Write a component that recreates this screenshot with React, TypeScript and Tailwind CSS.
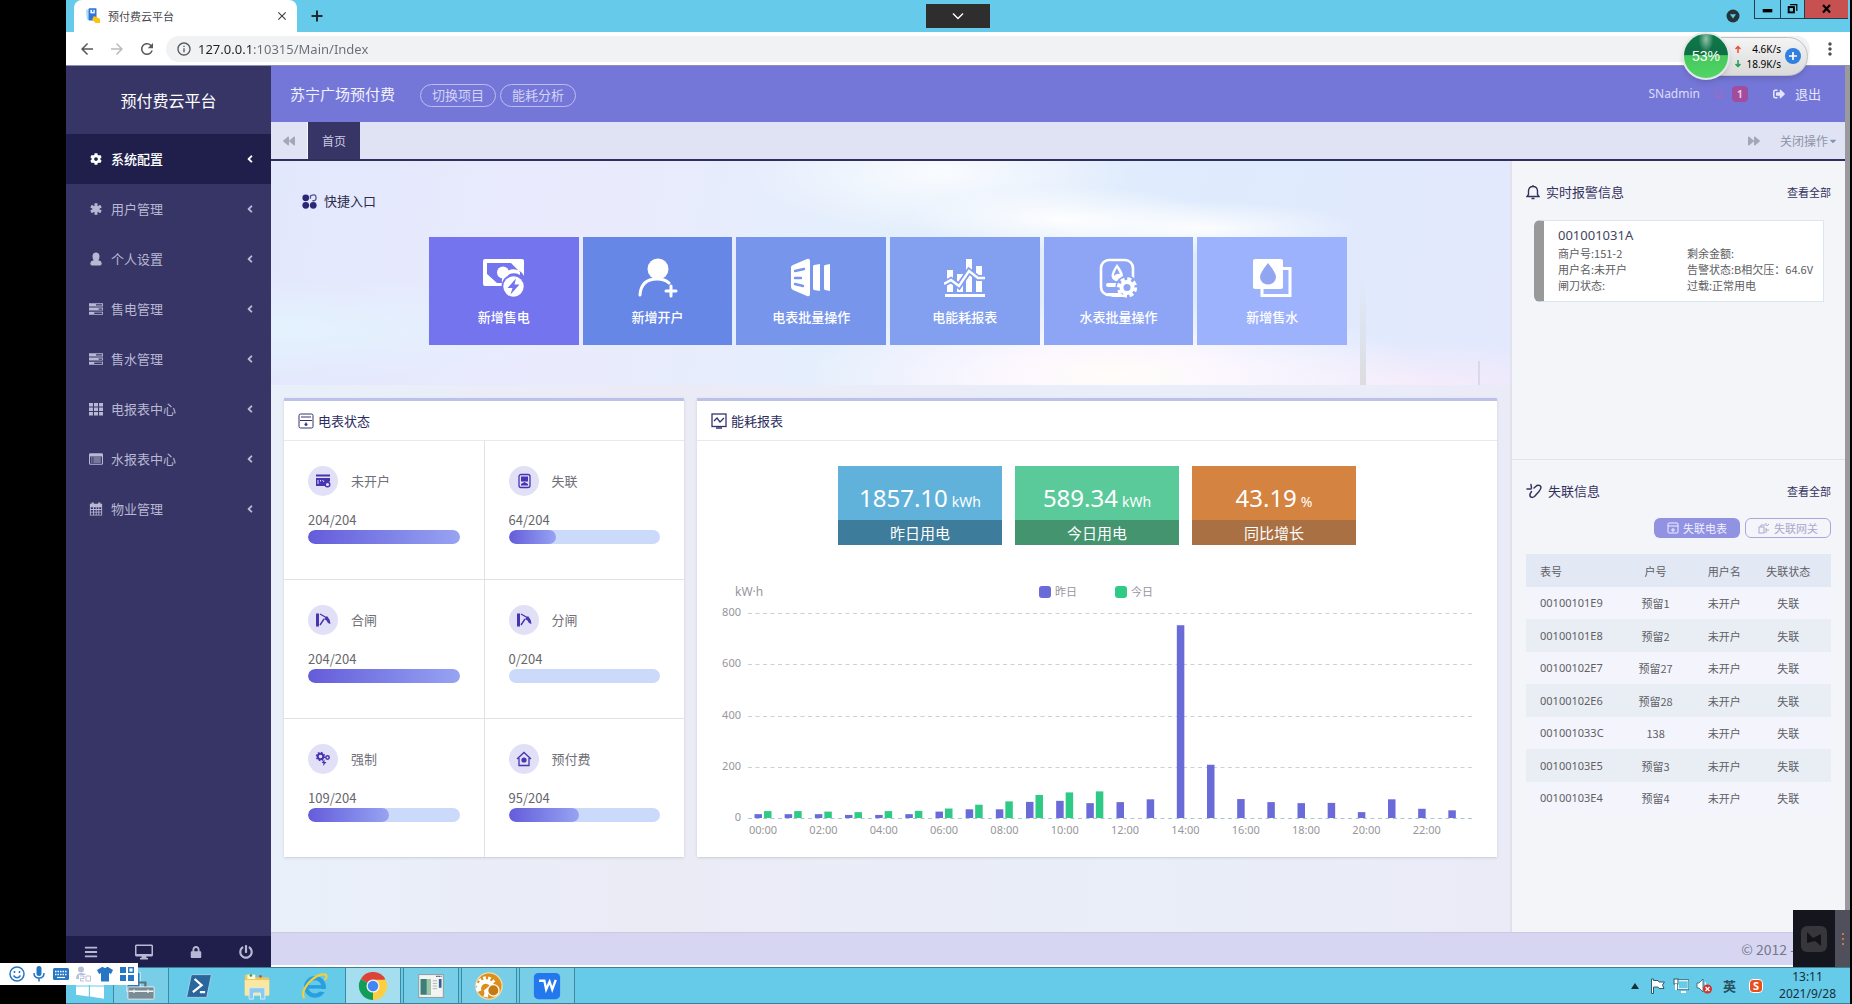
import type { ReactNode } from "react";
import {
  FaAngleLeft,
  FaBackward,
  FaBars,
  FaCaretDown,
  FaCog,
  FaForward,
  FaLock,
  FaPowerOff,
  FaSignOutAlt,
} from "react-icons/fa";
import {
  MdArrowBack,
  MdArrowForward,
  MdClose,
  MdMoreVert,
  MdOutlineInfo,
  MdRefresh,
} from "react-icons/md";

/* ---------- Browser window ---------- */

function TabStrip() {
  return (
    <div className="flex h-8 items-stretch bg-[#66cbea]">
      <div className="ml-2 flex w-[223px] items-center gap-2 rounded-t-lg bg-white pr-2 pl-3">
        <svg viewBox="0 0 16 18" className="h-4 w-3.5 shrink-0">
          <path d="M0 2 L4 1 V14 L1 13 Z" fill="#a9dcf5" />
          <rect x="3" y="0" width="9" height="14" rx="1" fill="#2f74d8" />
          <rect x="5" y="2" width="5" height="4" fill="#fff" />
          <rect x="7" y="2" width="1.5" height="2.5" fill="#2f74d8" />
          <path d="M9 9 L16 12 V17 H11 L7 13 Z" fill="#fcc40c" />
        </svg>
        <span className="flex-1 text-[11px] leading-4 text-[#45484d]">预付费云平台</span>
        <button aria-label="关闭标签页" className="text-[#3c4043]">
          <MdClose className="size-3.5" />
        </button>
      </div>
      <button aria-label="新标签页" className="ml-3 text-[#1f2a30]">
        <svg viewBox="0 0 16 16" className="size-4">
          <path d="M8 2.5V13.5M2.5 8H13.5" stroke="currentColor" strokeWidth="2" />
        </svg>
      </button>
      <div className="flex-1" />
      <button aria-label="搜索标签页" className="mr-3.5">
        <svg viewBox="0 0 14 14" className="size-3.5">
          <circle cx="7" cy="7" r="6.5" fill="#24343b" />
          <path d="M4 5.2H10L7 9.4Z" fill="#66cbea" />
        </svg>
      </button>
      <div className="mr-0.5 flex h-[19px] items-stretch border-b border-l border-[#22404c] text-black">
        <button aria-label="最小化" className="w-[26px] border-r border-[#22404c]">
          <svg viewBox="0 0 26 18" className="h-[18px] w-full">
            <rect x="8" y="9" width="10" height="3.5" />
          </svg>
        </button>
        <button aria-label="还原" className="w-6 border-r border-[#22404c]">
          <svg viewBox="0 0 24 18" className="h-[18px] w-full" fill="none" stroke="black">
            <path d="M9.5 4.5H16.5V11" strokeWidth="1.2" />
            <rect x="8" y="7" width="5.5" height="5.5" strokeWidth="2" />
          </svg>
        </button>
        <button aria-label="关闭" className="w-[43px] bg-[#c75050]">
          <svg viewBox="0 0 43 18" className="h-[18px] w-full">
            <path d="M18 5L25 12.5M25 5L18 12.5" stroke="black" strokeWidth="2.2" />
          </svg>
        </button>
      </div>
    </div>
  );
}

function Toolbar() {
  return (
    <div className="flex h-[34px] items-center border-b border-[#8f8fb4] bg-white pl-3 text-[#55585c]">
      <button aria-label="后退">
        <MdArrowBack className="size-[18px]" />
      </button>
      <button aria-label="前进" className="ml-3 text-[#b9bbbe]">
        <MdArrowForward className="size-[18px]" />
      </button>
      <button aria-label="刷新" className="ml-3">
        <MdRefresh className="size-[18px]" />
      </button>
      <div className="ml-2.5 flex h-[26px] flex-1 items-center gap-1.5 rounded-full bg-[#f1f2f4] px-2.5">
        <MdOutlineInfo className="size-4" />
        <input
          aria-label="地址"
          defaultValue="127.0.0.1:10315/Main/Index"
          className="w-full flex-1 bg-[linear-gradient(90deg,#202124_54px,#6a6d72_54px)] bg-clip-text font-['Noto_Sans'] text-[13px] leading-5 text-transparent outline-none"
        />
      </div>
      <button aria-label="菜单" className="mx-2.5 text-[#4a4d51]">
        <MdMoreVert className="size-5" />
      </button>
    </div>
  );
}

/* ---------- Sidebar ---------- */

const tasksIcon = (
  <path
    fillRule="evenodd"
    d="M0 1.500H16V5H0ZM8 2.500V4H15V2.500ZM0 6.300H16V9.800H0ZM11 7.300V8.800H15V7.300ZM0 11.100H16V14.600H0ZM6 12.100V13.600H15V12.100Z"
  />
);

const menu: { label: string; icon: ReactNode; active?: boolean }[] = [
  { label: "系统配置", icon: null, active: true },
  {
    label: "用户管理",
    icon: (
      <path d="M8 1.500V14.500M2.300 4.700L13.700 11.300M13.700 4.700L2.300 11.300" stroke="currentColor" strokeWidth="3.400" />
    ),
  },
  {
    label: "个人设置",
    icon: (
      <path d="M8 0.500Q12 0.500 12 5Q12 8 10.500 9.500Q14.500 10 14.500 13.500Q14.500 15.500 12.500 15.500H3.500Q1.500 15.500 1.500 13.500Q1.500 10 5.500 9.500Q4 8 4 5Q4 0.500 8 0.500Z" />
    ),
  },
  { label: "售电管理", icon: tasksIcon },
  { label: "售水管理", icon: tasksIcon },
  {
    label: "电报表中心",
    icon: (
      <path d="M0 1H4.500V5H0ZM5.700 1H10.300V5H5.700ZM11.500 1H16V5H11.500ZM0 6.200H4.500V10.200H0ZM5.700 6.200H10.300V10.200H5.700ZM11.500 6.200H16V10.200H11.500ZM0 11.400H4.500V15.400H0ZM5.700 11.400H10.300V15.400H5.700ZM11.500 11.400H16V15.400H11.500Z" />
    ),
  },
  {
    label: "水报表中心",
    icon: (
      <path
        fillRule="evenodd"
        d="M1 1.500H15L16 2.500V13.500L15 14.500H1L0 13.500V2.500ZM1.200 5V13.300H14.800V5ZM2.500 6.200H4V7.400H2.500ZM5 6.200H13.500V7.400H5ZM2.500 8.500H4V9.700H2.500ZM5 8.500H13.500V9.700H5ZM2.500 10.800H4V12H2.500ZM5 10.800H13.500V12H5Z"
      />
    ),
  },
  {
    label: "物业管理",
    icon: (
      <path
        fillRule="evenodd"
        d="M1 2H3V.500H5.500V2H10.500V.500H13V2H15V15.500H1ZM2 6V8H4.600V6ZM5.600 6V8H7.700V6ZM8.700 6V8H10.700V6ZM11.700 6V8H14V6ZM2 9V11H4.600V9ZM5.600 9V11H7.700V9ZM8.700 9V11H10.700V9ZM11.700 9V11H14V9ZM2 12V14.500H4.600V12ZM5.600 12V14.500H7.700V12ZM8.700 12V14.500H10.700V12ZM11.700 12V14.500H14V12Z"
      />
    ),
  },
];

function Sidebar() {
  return (
    <aside className="flex w-[205px] shrink-0 flex-col bg-[#363565]">
      <h1 className="py-[22px] text-center text-base leading-6 text-white">预付费云平台</h1>
      <nav className="flex flex-1 flex-col">
        {menu.map(({ label, icon, active }) => (
          <a
            key={label}
            href="#"
            className={
              active
                ? "flex h-[50px] items-center bg-[#201f4b] pr-[15px] pl-[23px] text-[13px] font-medium text-white"
                : "flex h-[50px] items-center pr-[15px] pl-[23px] text-[13px] text-[#b9b8d4]"
            }
          >
            {icon ? (
              <svg viewBox="0 0 16 16" className="mr-2 size-3.5" fill="currentColor">
                {icon}
              </svg>
            ) : (
              <FaCog className="mr-2 size-3.5 p-px" />
            )}
            <span className="flex-1">{label}</span>
            <FaAngleLeft className="size-3" />
          </a>
        ))}
      </nav>
      <div className="flex h-[31px] items-center justify-around bg-[#201f4b] text-[#b9b8d4]">
        <button aria-label="菜单">
          <FaBars className="size-3.5" />
        </button>
        <button aria-label="全屏">
          <svg viewBox="0 0 18 16" className="h-4 w-[18px]" fill="currentColor">
            <path
              fillRule="evenodd"
              d="M1 .500H17L18 1.500V11.500L17 12.500H11.500V14H13V15.500H5V14H6.500V12.500H1L0 11.500V1.500ZM1.500 2V10H16.500V2Z"
            />
          </svg>
        </button>
        <button aria-label="锁定">
          <FaLock className="size-3" />
        </button>
        <button aria-label="退出系统">
          <FaPowerOff className="size-3.5" />
        </button>
      </div>
    </aside>
  );
}

/* ---------- Page header ---------- */

function PageHeader() {
  return (
    <>
      <header className="flex h-14 items-center bg-[#7577d8] pr-6 pl-[19px] text-[#e6e6fb]">
        <span className="text-[15px] leading-5 text-[#f2f2ff]">苏宁广场预付费</span>
        <div className="mt-0.5 ml-[25px] flex gap-1">
          {["切换项目", "能耗分析"].map((t) => (
            <button
              key={t}
              className="h-[23px] w-[76px] rounded-full border border-[#bcbdf0] text-[13px] leading-5 text-[#d2d3f6]"
            >
              {t}
            </button>
          ))}
        </div>
        <div className="flex-1" />
        <span className="font-['Noto_Sans'] text-xs leading-5 text-[#dcdcf8]">SNadmin</span>
        <button aria-label="消息" className="ml-3.5 flex items-center gap-2">
          <svg viewBox="0 0 12 12" className="size-2.5" fill="none" stroke="#9a6cc4" strokeWidth="1.500">
            <path d="M2 9V5Q2 1.500 6 1.500Q10 1.500 10 5V9H2ZM4.500 11H7.500" />
          </svg>
          <span className="size-4 rounded-sm bg-[#a04d9e] font-['Noto_Sans'] text-[10px] leading-4 font-bold text-[#f0c8e0]">
            1
          </span>
        </button>
        <a href="#" className="ml-[25px] flex items-center gap-2.5 text-[13px] leading-5">
          <FaSignOutAlt className="size-3" />
          退出
        </a>
      </header>
      <div className="flex h-[39px] items-stretch border-b-2 border-[#2f2e5c] bg-[#dfe3f4] text-[#8f93a8]">
        <button aria-label="向左滚动" className="w-[37px] border-r border-white/70 pl-3 text-[#a3a6b8]">
          <FaBackward className="size-3" />
        </button>
        <button className="w-[52px] bg-[#363565] text-xs text-[#c9c8e2]">首页</button>
        <div className="flex-1" />
        <button aria-label="向右滚动" className="pr-5 text-[#a3a6b8]">
          <FaForward className="size-3" />
        </button>
        <button className="flex items-center pr-[7px] text-xs">
          关闭操作
          <FaCaretDown className="size-2.5" />
        </button>
      </div>
    </>
  );
}

/* ---------- Quick entries ---------- */

const tiles: { label: string; tone: string; icon: ReactNode }[] = [
  {
    label: "新增售电",
    tone: "bg-[#7474ee]",
    icon: (
      <>
        <path
          fillRule="evenodd"
          d="M2 1H39Q41 1 41 3V18A11 11 0 0 0 20 28H2Q0 28 0 26V3Q0 1 2 1ZM4 5V16L14 25H20A11 11 0 0 1 37 17V14L28 5Z"
        />
        <circle cx="20" cy="14.5" r="6" />
        <circle cx="30.5" cy="28.5" r="12" fill="#7474ee" />
        <circle cx="30.5" cy="28.5" r="10.2" />
        <path d="M33 20.5L24.5 30H29.5L27.5 36.5L36.5 26.5H31.5Z" fill="#7474ee" />
      </>
    ),
  },
  {
    label: "新增开户",
    tone: "bg-[#6787e6]",
    icon: (
      <>
        <circle cx="22" cy="11" r="10.5" />
        <path d="M4 37Q5 21 21 21Q29 21 33 25" fill="none" stroke="white" strokeWidth="3" strokeLinecap="round" />
        <path d="M35 28V38M30 33H40" stroke="white" strokeWidth="3" strokeLinecap="round" />
      </>
    ),
  },
  {
    label: "电表批量操作",
    tone: "bg-[#7795eb]",
    icon: (
      <>
        <path d="M3 7L17 1Q20 0 20 3V36Q20 39 17 38L3 32Q1 31 1 29V9Q1 8 3 7Z" />
        <path d="M5 13L14 11M5 20H11M5 26L13 28" stroke="#7795eb" strokeWidth="2.4" strokeLinecap="round" />
        <path d="M24 7L30 6V33L24 32Q23 32 23 30V9Q23 7 24 7Z" />
        <path d="M35 7L40 6V33L35 32Q34 32 34 30V9Q34 7 35 7Z" />
      </>
    ),
  },
  {
    label: "电能耗报表",
    tone: "bg-[#839ff0]",
    icon: (
      <>
        <path d="M3 12H9V34H3ZM13 16H19V34H13ZM22 1H28V34H22ZM32 8H38V34H32Z" />
        <path d="M0 26L7 22L15 28L25 13L34 20H41" fill="none" stroke="#839ff0" strokeWidth="6" />
        <path d="M0 26L7 22L15 28L25 13L34 20H41" fill="none" stroke="white" strokeWidth="2.4" />
        <rect x="1" y="36" width="40" height="3" />
      </>
    ),
  },
  {
    label: "水表批量操作",
    tone: "bg-[#8da5f4]",
    icon: (
      <>
        <rect x="4" y="2" width="32" height="35" rx="8" fill="none" stroke="white" strokeWidth="2.6" />
        <path d="M20 6Q26 14 26 17.5A5.7 5.7 0 0 1 14.500 17.500Q14.500 14 20 6Z" />
        <path d="M20 10Q17 15 17 18Q20 15 23 16Z" fill="#8da5f4" />
        <rect x="9" y="25" width="12" height="4" rx="2" />
        <circle cx="30" cy="29" r="11.500" fill="#8da5f4" />
        <path d="M10 35H24L28 39H16Q12 38 10 35Z" />
        <circle cx="30" cy="29.500" r="7.500" />
        <circle
          cx="30"
          cy="29.500"
          r="8.500"
          fill="none"
          stroke="white"
          strokeWidth="3.400"
          strokeDasharray="4 2.675"
        />
        <circle cx="30" cy="29.500" r="3.500" fill="#8da5f4" />
      </>
    ),
  },
  {
    label: "新增售水",
    tone: "bg-[#9db2fd]",
    icon: (
      <>
        <path d="M30 10.500H39V37.500H11V30" fill="none" stroke="white" strokeWidth="3" />
        <rect x="2" y="1" width="30" height="30" rx="2" />
        <path d="M17 5Q25 15 25 19A8 7.500 0 0 1 9 19Q9 15 17 5Z" fill="#91a5f0" />
      </>
    ),
  },
];

function QuickEntry() {
  return (
    <section className="relative bg-[radial-gradient(ellipse_at_64%_26%,rgba(255,255,255,.95)_0%,transparent_14%),radial-gradient(ellipse_at_75%_30%,rgba(255,255,255,.9)_0%,transparent_12%),radial-gradient(ellipse_at_54%_5%,rgba(255,255,255,.8)_0%,transparent_20%),radial-gradient(ellipse_at_68%_96%,#fffdf8_0%,rgba(254,248,255,.9)_10%,transparent_26%),radial-gradient(ellipse_at_92%_100%,#f6ecfb_0%,transparent_14%),radial-gradient(ellipse_at_0%_75%,#e4f2fe_0%,transparent_22%),linear-gradient(100deg,#e2e8fc_0%,#eaeafd_24%,#e4effc_48%,#dfebfd_75%,#e3e8fd_100%)] pt-[30px] pr-9 pb-10 pl-[31px]">
      <h2 className="flex items-center gap-[7px] text-[13px] leading-5 text-[#2b2b4a]">
        <svg viewBox="0 0 16 16" className="size-[15px]" fill="#2a2775">
          <circle cx="4" cy="4" r="3.600" />
          <circle cx="4" cy="12" r="3.600" />
          <circle cx="12" cy="12" r="3.600" />
          <path d="M9 5V2Q15 -1 15 4Q15 8 11 7" fill="none" stroke="#55538f" strokeWidth="1.400" />
        </svg>
        快捷入口
      </h2>
      <div className="mx-auto mt-[26px] grid max-w-[918px] grid-cols-6 gap-1">
        {tiles.map((t) => (
          <a
            key={t.label}
            href="#"
            className={`flex flex-col items-center pt-[21px] pb-[18px] text-[13px] leading-5 font-medium text-white ${t.tone}`}
          >
            <svg viewBox="0 0 42 40" className="mb-[9px] h-10 w-[42px]" fill="white">
              {t.icon}
            </svg>
            {t.label}
          </a>
        ))}
      </div>
      <div className="absolute right-36 bottom-0 h-[106px] w-1.5 bg-gradient-to-b from-[#dfeafb] to-[#dcdce0]" />
      <div className="absolute right-[30px] bottom-0 h-6 w-0.5 bg-[#dcd8e6]" />
    </section>
  );
}

/* ---------- Meter status ---------- */

const statuses: { label: string; value: number; icon: ReactNode }[] = [
  {
    label: "未开户",
    value: 204,
    icon: (
      <>
        <rect x="1" y="1.500" width="14" height="2" />
        <path d="M1 5H15V8L10 13H1Z" />
        <path d="M3 7V11M5.500 7V8.500M7.500 7L9 9" stroke="#e2dff8" />
        <circle cx="12.500" cy="11.500" r="2.300" fill="#e2dff8" stroke="#4634b0" strokeWidth="1.400" />
      </>
    ),
  },
  {
    label: "失联",
    value: 64,
    icon: (
      <>
        <rect x="3" y="1.500" width="11" height="13" rx="2" fill="none" stroke="#4634b0" strokeWidth="1.300" />
        <rect x="5" y="3.500" width="7" height="5" />
        <path d="M5 11L8.500 9L12 11V12.500H5Z" />
      </>
    ),
  },
  {
    label: "合闸",
    value: 204,
    icon: (
      <>
        <rect x="1" y="1.500" width="3" height="13" />
        <path d="M5 2L12 6M5 13L9 7" stroke="#4634b0" strokeWidth="1.400" />
        <path d="M9 7L12 4Q15 7 15.500 12L13 11Q12 8 9 7Z" />
      </>
    ),
  },
  {
    label: "分闸",
    value: 0,
    icon: (
      <>
        <rect x="1" y="1.500" width="3" height="13" />
        <path d="M5 2L12 6M5 13L9 7" stroke="#4634b0" strokeWidth="1.400" />
        <path d="M9 7L12 4Q15 7 15.500 12L13 11Q12 8 9 7Z" />
      </>
    ),
  },
  {
    label: "强制",
    value: 109,
    icon: (
      <>
        <circle cx="5.500" cy="5.500" r="2.800" fill="none" stroke="#4634b0" strokeWidth="2" />
        <circle
          cx="5.500"
          cy="5.500"
          r="4"
          fill="none"
          stroke="#4634b0"
          strokeWidth="1.400"
          strokeDasharray="1.600 1.540"
        />
        <circle cx="12.500" cy="6.500" r="1.700" fill="none" stroke="#4634b0" strokeWidth="1.500" />
        <path d="M9.500 8.500L6.500 12H8.500L8 15L11.500 11H9.500Z" />
      </>
    ),
  },
  {
    label: "预付费",
    value: 95,
    icon: (
      <>
        <path d="M1 8L8 1.500L15 8M3 7V14.500H13V7" fill="none" stroke="#4634b0" strokeWidth="1.300" />
        <circle cx="8" cy="9" r="2.600" />
      </>
    ),
  },
];

const TOTAL = 204;

function PanelTitle({ icon, children }: { icon: ReactNode; children: ReactNode }) {
  return (
    <h2 className="flex h-10 items-center gap-1 border-b border-[#e8e9ee] px-3.5 text-[13px] text-[#2d2c5e]">
      <svg viewBox="0 0 16 16" className="size-4" fill="none" stroke="#35336e">
        {icon}
      </svg>
      {children}
    </h2>
  );
}

function MeterStatus() {
  return (
    <section className="flex flex-col border-t-[3px] border-[#bcc1ea] bg-white shadow-sm">
      <PanelTitle
        icon={
          <>
            <rect x="1" y="1" width="14" height="14" rx="1.500" />
            <path d="M3 4H13M2 7.500H14" />
            <path d="M8 9.500V13M6.500 11.500H9.500" strokeWidth="1.400" />
          </>
        }
      >
        电表状态
      </PanelTitle>
      <div className="grid flex-1 grid-cols-2 gap-px bg-[#dfe2e6]">
        {statuses.map((s) => (
          <div key={s.label} className="bg-white px-6 pt-[25px] pb-[35px]">
            <div className="flex items-center gap-[13px] text-[13px] leading-5 text-[#707078]">
              <span className="flex size-[30px] items-center justify-center rounded-full bg-[#e2e0f7]">
                <svg viewBox="0 0 16 16" className="size-4" fill="#4634b0">
                  {s.icon}
                </svg>
              </span>
              {s.label}
            </div>
            <div className="mt-3.5 text-[13px] leading-5 text-[#66666c]">
              {s.value}/{TOTAL}
            </div>
            <div
              role="progressbar"
              aria-label={s.label}
              aria-valuenow={s.value}
              aria-valuemax={TOTAL}
              className="h-3.5 overflow-hidden rounded-full bg-[#cbdafb]"
            >
              <div
                className="h-full rounded-full bg-gradient-to-r from-[#655bda] to-[#97a3f2]"
                style={{ width: `${(s.value / TOTAL) * 100}%` }}
              />
            </div>
          </div>
        ))}
      </div>
    </section>
  );
}

/* ---------- Energy report ---------- */

const cards = [
  { value: "1857.10", unit: "kWh", label: "昨日用电", top: "bg-[#60b2da]", bottom: "bg-[#3e7c9b]" },
  { value: "589.34", unit: "kWh", label: "今日用电", top: "bg-[#5aca9b]", bottom: "bg-[#44956f]" },
  { value: "43.19", unit: "%", label: "同比增长", top: "bg-[#d58341]", bottom: "bg-[#a97043]" },
];

const yesterday = [
  15, 15, 15, 12, 12, 15, 25, 34, 34, 63, 67, 58, 62, 73, 753, 208, 74, 62, 58, 59, 23, 73, 36, 30,
];
const today = [27, 27, 25, 23, 27, 28, 37, 52, 65, 90, 100, 104];

function EnergyChart() {
  const left = 51;
  const base = 249;
  const step = 724 / 24;
  const unit = 0.256;
  return (
    <svg viewBox="0 0 800 273" className="mt-6 w-full font-['Noto_Sans'] text-[11px]" fill="#96969c">
      <text x="38" y="27" className="text-xs">
        kW·h
      </text>
      <rect x="342" y="17" width="12" height="12" rx="3" fill="#6b6ad9" />
      <text x="358" y="27" className="font-['Noto_Sans_CJK_SC']">
        昨日
      </text>
      <rect x="418" y="17" width="12" height="12" rx="3" fill="#2fcb86" />
      <text x="434" y="27" className="font-['Noto_Sans_CJK_SC']">
        今日
      </text>
      {[0, 200, 400, 600, 800].map((v) => (
        <g key={v}>
          <text x="44" y={base - v * unit + 3} textAnchor="end">
            {v}
          </text>
          <line
            x1={left}
            x2="775"
            y1={Math.round(base - v * unit) + 0.5}
            y2={Math.round(base - v * unit) + 0.5}
            stroke={v === 0 ? "#a9c8d0" : "#ccd0d4"}
            strokeDasharray="4 3.5"
          />
        </g>
      ))}
      {yesterday.map((v, i) => (
        <rect key={i} x={left + i * step + 6.500} y={base - v * unit} width="7.500" height={v * unit} fill="#6b6ad9" />
      ))}
      {today.map((v, i) => (
        <rect key={i} x={left + i * step + 16} y={base - v * unit} width="7.500" height={v * unit} fill="#2fcb86" />
      ))}
      {yesterday.map((_, i) =>
        i % 2 === 0 ? (
          <text key={i} x={left + (i + 0.5) * step} y={base + 16} textAnchor="middle">
            {`${String(i).padStart(2, "0")}:00`}
          </text>
        ) : null,
      )}
    </svg>
  );
}

function EnergyReport() {
  return (
    <section className="border-t-[3px] border-[#bcc1ea] bg-white shadow-sm">
      <PanelTitle
        icon={
          <>
            <rect x="1" y="1" width="14" height="12.500" strokeWidth="1.300" />
            <path d="M3 8L6 5L9 9L13 5M5 15H11" strokeWidth="1.300" />
          </>
        }
      >
        能耗报表
      </PanelTitle>
      <div className="mt-[25px] flex justify-center gap-[13px] text-white">
        {cards.map((c) => (
          <div key={c.label} className={`w-[164px] ${c.top}`}>
            <div className="flex h-[54px] items-baseline justify-center gap-1 pt-3.5 font-['Noto_Sans']">
              <span className="text-2xl leading-9">{c.value}</span>
              <span className="text-sm leading-5">{c.unit}</span>
            </div>
            <div className={`text-center text-[15px] leading-[25px] ${c.bottom}`}>{c.label}</div>
          </div>
        ))}
      </div>
      <EnergyChart />
    </section>
  );
}

/* ---------- Right column ---------- */

function AlertPanel() {
  return (
    <section className="h-[299px] border-b border-[#e3e4ea] px-3.5 pt-[21px]">
      <div className="flex items-center text-[13px] leading-5 text-[#34325e]">
        <svg viewBox="0 0 14 16" className="mr-1.5 h-4 w-3.5" fill="none" stroke="#34325e" strokeWidth="1.400">
          <path d="M7 1V2.500M1 12.500H13L11.500 10.500V7Q11.500 2.500 7 2.500Q2.500 2.500 2.500 7V10.500ZM5.500 14.500H8.500" />
        </svg>
        <h2 className="flex-1">实时报警信息</h2>
        <a href="#" className="text-[11px] leading-5">
          查看全部
        </a>
      </div>
      <article className="mt-[18px] mr-[7px] ml-2 rounded-l-md border border-l-[10px] border-[#dce6f0] border-l-[#999999] bg-white pt-1 pb-2 pl-3.5 text-[11px] text-[#5d5d62]">
        <h3 className="font-['Noto_Sans'] text-[13px] leading-5 text-[#45455e]">001001031A</h3>
        <div className="grid grid-cols-[129px_1fr] leading-4 whitespace-nowrap">
          <span>商户号:151-2</span>
          <span>剩余金额:</span>
          <span>用户名:未开户</span>
          <span>告警状态:B相欠压：64.6V</span>
          <span>闸刀状态:</span>
          <span>过载:正常用电</span>
        </div>
      </article>
    </section>
  );
}

const offline = [
  ["00100101E9", "预留1"],
  ["00100101E8", "预留2"],
  ["00100102E7", "预留27"],
  ["00100102E6", "预留28"],
  ["001001033C", "138"],
  ["00100103E5", "预留3"],
  ["00100103E4", "预留4"],
];

function OfflinePanel() {
  return (
    <section className="px-3.5 pt-[21px]">
      <div className="flex items-center text-[13px] leading-5 text-[#34325e]">
        <svg
          viewBox="0 0 16 16"
          className="mr-1.5 size-4"
          fill="none"
          stroke="#34325e"
          strokeWidth="1.500"
          strokeLinecap="round"
        >
          <path d="M5 1.500L5.500 5M1 6H5M8 5L11 2.500Q14 1.500 15 4Q15 6 13 8.500L8.500 13.500Q5.500 15.500 4 13Q3.500 11 5.500 8.500" />
        </svg>
        <h2 className="flex-1">失联信息</h2>
        <a href="#" className="text-[11px] leading-5">
          查看全部
        </a>
      </div>
      <div className="mt-[17px] flex justify-end gap-[5px] text-[11px] leading-4">
        <button className="flex h-5 w-[86px] items-center justify-center gap-1 rounded-md bg-[#9192e2] text-[#f0f0ff]">
          <svg viewBox="0 0 12 12" className="size-3" fill="none" stroke="currentColor">
            <rect x="1" y="1" width="10" height="10" rx="1" />
            <path d="M1 4H11M6 6V10M4 8H8" />
          </svg>
          失联电表
        </button>
        <button className="flex h-5 w-[86px] items-center justify-center gap-1 rounded-md border border-[#a9a8de] text-[#a9a8cf]">
          <svg viewBox="0 0 12 12" className="size-3" fill="none" stroke="currentColor">
            <rect x="1" y="5" width="5" height="6" />
            <path d="M3 5V3H7M8 1V4M11 2L9 4M8 6V11M8 8H11" />
          </svg>
          失联网关
        </button>
      </div>
      <table className="mt-4 w-full table-fixed text-center text-[11px] leading-4 text-[#5f5f64]">
        <thead>
          <tr className="h-[33px] bg-[#e3e8f5]">
            <th className="w-[27%] pl-3.5 text-left font-normal">表号</th>
            <th className="w-[31%] font-normal">户号</th>
            <th className="w-[14%] font-normal whitespace-nowrap">用户名</th>
            <th className="font-normal">失联状态</th>
          </tr>
        </thead>
        <tbody>
          {offline.map(([meter, account]) => (
            <tr key={meter} className="odd:h-8 odd:bg-[#f3f4fc] even:h-[33px] even:bg-[#e9eef5]">
              <td className="pl-3.5 text-left font-['Noto_Sans']">{meter}</td>
              <td>{account}</td>
              <td className="whitespace-nowrap">未开户</td>
              <td>失联</td>
            </tr>
          ))}
        </tbody>
      </table>
    </section>
  );
}

/* ---------- Desktop ---------- */

function TaskButton({ label, open, children }: { label: string; open?: "running" | "front"; children: ReactNode }) {
  return (
    <button
      aria-label={label}
      className={
        open === "front"
          ? "flex w-14 items-center justify-center border-x border-[#3f8aa3] bg-[#a5deee]"
          : open === "running"
            ? "flex w-14 items-center justify-center border-x border-[#3f8aa3] bg-[#78cee6]"
            : "flex w-14 items-center justify-center"
      }
    >
      <svg viewBox="0 0 32 32" className="h-7 w-8">
        {children}
      </svg>
    </button>
  );
}

function Taskbar() {
  return (
    <footer className="flex h-[37px] items-stretch border-t border-b border-[#3f7f96] bg-[#66cbe8] font-['Noto_Sans'] text-[#16303a]">
      <button aria-label="开始" className="flex w-[47px] items-center justify-center">
        <svg viewBox="0 0 24 24" className="size-7" fill="white">
          <path d="M0 4L11 2V11.500H0ZM12 2L24 0V11.500H12ZM0 12.500H11V21L0 19.500ZM12 12.500H24V23L12 21Z" />
        </svg>
      </button>
      <div className="flex gap-0.5">
        <TaskButton label="服务器管理器" open="running">
          <rect x="0" y="0" width="15" height="22" fill="#1f7fc4" stroke="#fff" />
          <path d="M11 17V12H21V17" fill="none" stroke="#5f6f78" strokeWidth="2.500" />
          <rect x="1" y="17" width="30" height="14" rx="1" fill="#7b8b94" stroke="#eef5f8" />
          <path d="M2 22H30M8 20V24M24 20V24" stroke="#eef5f8" strokeWidth="1.500" />
        </TaskButton>
        <TaskButton label="PowerShell">
          <path d="M8 3H29Q30 3 30 4L25 28Q25 29 24 29H3Q2 29 2 28L7 4Q7 3 8 3Z" fill="#2a669c" stroke="#a9d5ec" />
          <path d="M11 8L19 15L9 23M17 23H23" fill="none" stroke="#fff" strokeWidth="2.600" />
        </TaskButton>
        <TaskButton label="文件资源管理器">
          <path d="M2 3H10L12 6H28Q30 6 30 8V26H2Z" fill="#e9c761" />
          <path d="M5 3H14V8H5Z" fill="#fff7d8" />
          <circle cx="9" cy="4" r="1.500" fill="#3a9c4a" />
          <circle cx="20" cy="5" r="1.500" fill="#d24c2e" />
          <rect x="2" y="9" width="28" height="18" rx="1" fill="#fbe7a0" />
          <path d="M7 31V18H25V31H20V24H12V31Z" fill="#8cc9ee" stroke="#d8f0fb" />
        </TaskButton>
        <TaskButton label="Internet Explorer">
          <circle cx="16" cy="17" r="10" fill="none" stroke="#2a9fe0" strokeWidth="5" />
          <path d="M8 17H26" stroke="#2a9fe0" strokeWidth="4" />
          <path d="M20 19.500H31V24L20 22Z" fill="#66cbe8" />
          <path d="M4 30Q-1 24 9 12Q20 1 28 3Q31 5 27 9" fill="none" stroke="#f3cf3a" strokeWidth="2.500" />
        </TaskButton>
        <TaskButton label="Chrome" open="front">
          <path d="M16 16L2.100 8A16 16 0 0 1 29.900 8Z" fill="#db4437" />
          <path d="M16 16L29.900 8A16 16 0 0 1 16 32Z" fill="#ffcd40" />
          <path d="M16 16L16 32A16 16 0 0 1 2.100 8Z" fill="#0f9d58" />
          <path d="M16 8.500H30.100L22.500 20Z" fill="#ffcd40" />
          <path d="M16 8.500H30.100L28 5L16 2Z" fill="#db4437" />
          <circle cx="16" cy="16" r="7.500" fill="#f3f3f3" />
          <circle cx="16" cy="16" r="6" fill="#4285f4" />
        </TaskButton>
        <TaskButton label="应用程序" open="running">
          <rect x="2" y="3" width="28" height="26" fill="#f4f4f2" stroke="#8b9499" />
          <rect x="4" y="8" width="12" height="18" fill="#3c7f78" />
          <rect x="11" y="8" width="5" height="18" fill="#9cc4a8" />
          <path d="M18 10H23M18 13H23M18 16H23M18 19H23" stroke="#a9afb3" />
          <rect x="25" y="8" width="3" height="10" fill="#2f5f8e" />
          <path d="M22 5H28" stroke="#333" strokeWidth="1.500" strokeDasharray="1.500 1" />
        </TaskButton>
        <TaskButton label="服务工具" open="running">
          <circle cx="16" cy="16" r="15" fill="#dc8f1c" stroke="#f4dca0" strokeWidth="1.500" />
          <path d="M5 22A8 8 0 0 1 20 16" fill="none" stroke="#fff" strokeWidth="5" />
          <path d="M3.500 21A9.500 9.500 0 0 1 22 13" fill="none" stroke="#fff" strokeWidth="4" strokeDasharray="3 2.500" />
          <path d="M9 28Q12 25 10 21L15 17L15 29Z" fill="#fff" />
          <circle cx="21" cy="21" r="6.500" fill="#c87a12" stroke="#fff" strokeWidth="1.500" />
        </TaskButton>
        <TaskButton label="WPS" open="running">
          <rect x="1" y="1" width="30" height="30" rx="5" fill="#2478ee" />
          <path d="M7 10H13L15 20L19 11L22 20L26 9" fill="none" stroke="#fff" strokeWidth="2.600" />
        </TaskButton>
      </div>
      <div className="flex-1" />
      <div className="flex items-center gap-[7px]">
        <svg viewBox="0 0 8 8" className="mr-1 size-2">
          <path d="M0 7L4 1L8 7Z" fill="#16303a" />
        </svg>
        <svg viewBox="0 0 16 16" className="size-4" fill="#fff" stroke="#2f5c6c">
          <path d="M1.500 1V15.500H3.500V9H8L9 10.500H14L12.500 7L14.500 4H9L8 2.500H3.500V1Z" />
        </svg>
        <svg viewBox="0 0 16 16" className="size-4" fill="none" stroke="#2f5c6c">
          <rect x="5" y="2.500" width="10.500" height="8.500" fill="#66cbe8" stroke="#fff" strokeWidth="1.500" />
          <rect x="4.300" y="1.700" width="11.500" height="10" strokeWidth=".800" />
          <rect x="1" y="1" width="4" height="5" fill="#fff" />
          <path d="M3 6V12M8 14H13" stroke="#fff" strokeWidth="2" />
        </svg>
        <svg viewBox="0 0 16 16" className="size-4">
          <path d="M1 5H3L7 1V14L3 10H1Z" fill="#fff" stroke="#2f5c6c" strokeWidth=".800" />
          <path d="M9 4Q11 7 9 11" fill="none" stroke="#fff" />
          <circle cx="11.500" cy="11" r="4.500" fill="#d8302c" />
          <path d="M9.500 9L13.500 13M13.500 9L9.500 13" stroke="#fff" strokeWidth="1.400" />
        </svg>
        <span className="ml-1 font-['Noto_Sans_CJK_SC'] text-[13px] leading-4 font-bold text-[#28505e]">英</span>
        <span className="ml-1.5 flex size-3.5 items-center justify-center rounded-sm border border-white bg-[#ea4e1c] text-[11px] leading-3 font-bold text-white">
          S
        </span>
      </div>
      <div className="mr-3.5 ml-4 flex flex-col items-center text-xs leading-[17px]">
        <time>13:11</time>
        <time>2021/9/28</time>
      </div>
    </footer>
  );
}

function ImeBar() {
  return (
    <div className="absolute bottom-[19px] left-0 flex h-[22px] w-[138px] items-center gap-1.5 bg-white pl-[9px]">
      <svg viewBox="0 0 16 16" className="size-4 shrink-0" fill="none" stroke="#2576c4" strokeWidth="1.500">
        <circle cx="8" cy="8" r="7" />
        <path d="M5.500 5V7M10.500 5V7M4.500 9.500Q8 14 11.500 9.500" />
      </svg>
      <svg viewBox="0 0 16 16" className="size-4 shrink-0" fill="#2576c4">
        <rect x="5.500" y="0" width="5" height="10" rx="2.500" />
        <path d="M3 7Q3 12 8 12Q13 12 13 7M8 12V15.500" fill="none" stroke="#2576c4" strokeWidth="1.500" />
      </svg>
      <svg viewBox="0 0 16 16" className="size-4 shrink-0" fill="#2576c4">
        <rect x="0" y="2" width="16" height="12" rx="1.500" />
        <path d="M2 5.500H14M2 8.500H14" stroke="#fff" strokeWidth="1.500" strokeDasharray="1.500 1" />
        <path d="M4 11.500H12" stroke="#fff" strokeWidth="1.200" />
      </svg>
      <svg viewBox="0 0 16 16" className="size-4 shrink-0" fill="#b9bfd6">
        <circle cx="6" cy="3.500" r="3" />
        <path d="M1 13Q1 7 6 7Q10 7 11 9H4V13Z" />
        <path d="M5 10H9V12.500H5.500V15H9M11 10H15.500V15H11Z" fill="none" stroke="#b9bfd6" />
      </svg>
      <svg viewBox="0 0 16 16" className="size-4 shrink-0" fill="#2576c4">
        <path d="M5 1H6Q8 3 10 1H11L16 4L14 8L12 7V15.500H4V7L2 8L0 4Z" />
      </svg>
      <svg viewBox="0 0 16 16" className="size-4 shrink-0" fill="#2576c4">
        <rect x="1" y="1" width="6" height="6" />
        <rect x="9.700" y="1.700" width="4.600" height="4.600" fill="none" stroke="#2576c4" strokeWidth="1.400" />
        <rect x="1" y="9" width="6" height="6" />
        <rect x="9" y="9" width="6" height="6" />
      </svg>
    </div>
  );
}

function NetMeter() {
  return (
    <div className="absolute top-8 right-11 flex h-12 items-center">
      <div className="z-10 flex size-12 items-center justify-center rounded-full border-2 border-[#e4e8e6] bg-[radial-gradient(ellipse_at_50%_12%,rgba(255,255,255,.55)_0%,transparent_24%),linear-gradient(#0c7a48_0%,#0f6e44_48%,#45c85c_49%,#52d566_100%)] font-['Liberation_Sans'] text-sm text-white shadow-md">
        53%
      </div>
      <div className="-ml-3 flex h-[39px] w-[90px] items-center rounded-r-full border border-[#bfc1c4] bg-gradient-to-b from-[#f4f4f4] to-[#dadada] pl-4 shadow-md">
        <div className="flex flex-col gap-[7px]">
          <svg viewBox="0 0 6 8" className="h-2 w-1.5" fill="none" stroke="#e8512f" strokeWidth="1.500">
            <path d="M3 8V1.500M.5 4L3 1.500L5.500 4" />
          </svg>
          <svg viewBox="0 0 6 8" className="h-2 w-1.5" fill="none" stroke="#1d9e4c" strokeWidth="1.500">
            <path d="M3 0V6.500M.5 4L3 6.500L5.500 4" />
          </svg>
        </div>
        <div className="flex-1 pt-0.5 text-right font-['Noto_Sans'] text-[10px] leading-[15px] text-black">
          <div>4.6K/s</div>
          <div>18.9K/s</div>
        </div>
        <svg viewBox="0 0 16 16" className="mr-1.5 ml-1 size-4">
          <circle cx="8" cy="8" r="8" fill="#2f80e0" />
          <path d="M8 4V12M4 8H12" stroke="#fff" strokeWidth="1.700" />
        </svg>
      </div>
    </div>
  );
}

export default function App() {
  return (
    <div className="relative flex min-h-screen flex-col bg-black pr-0.5 pl-[66px] font-['Noto_Sans_CJK_SC',sans-serif]">
      <TabStrip />
      <Toolbar />
      <div className="flex flex-1">
        <Sidebar />
        <div className="flex min-w-0 flex-1 flex-col">
          <PageHeader />
          <div className="flex flex-1">
            <main className="min-w-0 flex-1 bg-[linear-gradient(90deg,#e9f0fa,#ebebf6_30%,#e9eef8_70%,#ebebf8)]">
              <QuickEntry />
              <div className="grid grid-cols-[1fr_2fr] gap-[13px] px-[13px] pt-[13px] pb-6">
                <MeterStatus />
                <EnergyReport />
              </div>
            </main>
            <aside className="w-[335px] shrink-0 border-l-2 border-[#e2e2ee] bg-[#f4f5f9]">
              <AlertPanel />
              <OfflinePanel />
            </aside>
          </div>
          <div className="flex h-[35px] items-center justify-end border-t border-b-2 border-t-[#c9c9e0] border-b-white bg-[#d6d6f2] pr-[50px] text-sm text-[#77778c]">
            © 2012 -
          </div>
        </div>
        <div className="w-[5px] bg-[#9a9a9e]" />
      </div>
      <Taskbar />

      <button
        aria-label="展开工具栏"
        className="absolute top-1 left-1/2 flex h-6 w-16 items-center justify-center bg-[#2e2e2e]"
      >
        <svg viewBox="0 0 12 8" className="h-2 w-3" fill="none" stroke="#fff" strokeWidth="1.400">
          <path d="M1 1.500L6 6.500L11 1.500" />
        </svg>
      </button>
      <NetMeter />
      <ImeBar />
      <div className="absolute right-0.5 bottom-[37px] flex h-[57px] w-[57px] bg-[#15151d]">
        <div className="flex flex-1 items-center justify-center">
          <svg viewBox="0 0 28 28" className="size-7">
            <rect x="1" y="1" width="26" height="26" rx="6" fill="#36363b" />
            <path d="M7 7L13 13L21 9V21L15 16L7 18Z" fill="#131319" />
          </svg>
        </div>
        <div className="flex w-[15px] items-center justify-center bg-[#50505c]">
          <svg viewBox="0 0 4 14" className="h-3.5 w-1" fill="#c47750">
            <rect x="1" y="1" width="2" height="2" />
            <rect x="1" y="6" width="2" height="2" />
            <rect x="1" y="11" width="2" height="2" />
          </svg>
        </div>
      </div>
    </div>
  );
}
